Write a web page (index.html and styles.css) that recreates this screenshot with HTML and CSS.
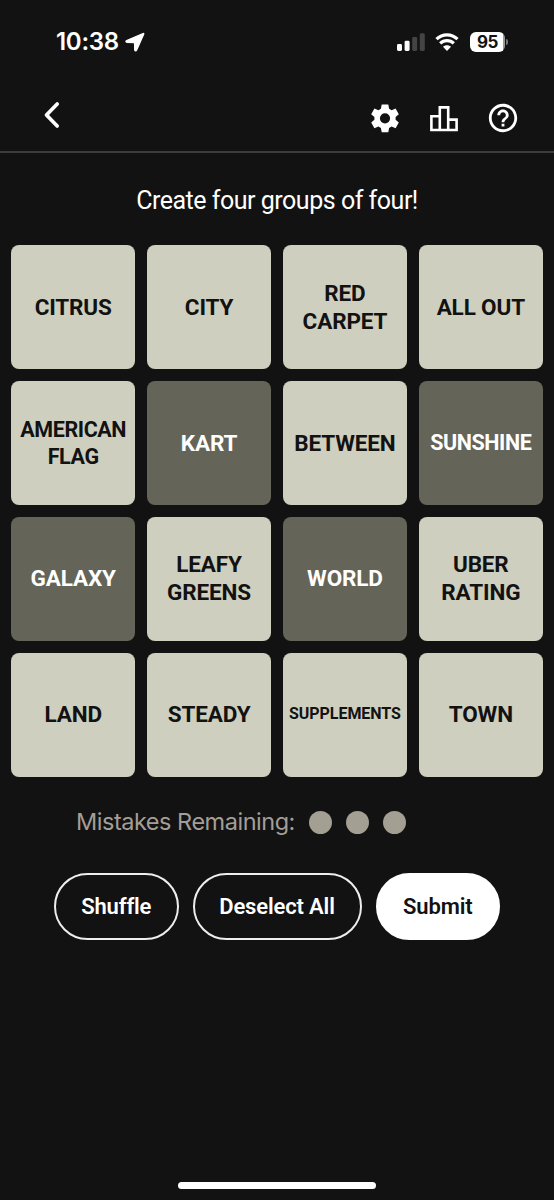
FILE: index.html
```html
<!DOCTYPE html>
<html lang="en">
<head>
<meta charset="utf-8">
<title>Connections</title>
<link rel="stylesheet" href="styles.css">
</head>
<body>
<div class="screen">
  <div class="status">
    <div class="clock"><span class="time">10:38</span>
      <svg class="location" width="20" height="20" viewBox="0 0 20 20"><path d="M18 1.500 1.700 8.600c-1.300.7-.9 1.700.3 1.800l7.500.3.200 7.200c.1 1.200 1.300 1.500 1.900.3L18.700 2.200c.3-.7-.1-1-.7-.7Z" fill="#fff" stroke="#fff" stroke-width="1.200" stroke-linejoin="round"/></svg>
    </div>
    <div class="indicators">
      <svg width="28" height="18" viewBox="0 0 28 18"><rect x="0" y="11" width="5" height="7" rx="1.4" fill="#fff"/><rect x="7.6" y="7.7" width="5" height="10.3" rx="1.4" fill="#fff"/><rect x="15.2" y="4" width="5" height="14" rx="1.4" fill="#444"/><rect x="22.8" y="0.3" width="5" height="17.7" rx="1.4" fill="#444"/></svg>
      <svg class="wifi" width="24" height="18" viewBox="0 0 24 18"><path d="M1.500 6.200C7.500 .3 16.500 .3 22.500 6.200M5.200 10.400C9.100 6.700 14.900 6.700 18.800 10.400" fill="none" stroke="#fff" stroke-width="3.200"/><path d="M8 13.800c2.300-2 5.700-2 8 0L12 17.900Z" fill="#fff"/></svg>
      <div class="battery"><span class="level">95</span></div><div class="battery-tip"></div>
    </div>
  </div>
  <div class="toolbar">
    <svg width="18" height="28" viewBox="0 0 18 28"><path d="M15.200 3 4.500 14l10.700 11" fill="none" stroke="#fff" stroke-width="3.700" stroke-linecap="round" stroke-linejoin="round"/></svg>
    <div class="tools">
      <svg width="34" height="34" viewBox="0 0 34 34"><path fill="#fff" fill-rule="evenodd" d="M13.700 3.500h6.600l.8 4.300 2.500 1.400 4-1.600 3.200 5.700-3.200 2.700v2.800l3.200 2.700-3.200 5.700-4-1.600-2.500 1.400-.8 4.200h-6.600l-.8-4.200-2.500-1.400-4 1.600-3.200-5.700 3.200-2.700V16l-3.200-2.700 3.200-5.700 4 1.600 2.500-1.400ZM17 12.200a5.100 5.100 0 1 0 0 10.200 5.100 5.100 0 0 0 0-10.200Z"/></svg>
      <svg width="28" height="34" viewBox="0 0 28 34"><path d="M9.800 15.300H1.400V29h25.200V18.600h-8.400M9.800 29.800V6.400h8.400v23.400" fill="none" stroke="#fff" stroke-width="2.600"/></svg>
      <svg width="34" height="34" viewBox="0 0 24 24"><path fill="#fff" d="M11 18h2v-2h-2v2Zm1-16C6.480 2 2 6.480 2 12s4.480 10 10 10 10-4.480 10-10S17.520 2 12 2Zm0 18c-4.410 0-8-3.590-8-8s3.590-8 8-8 8 3.590 8 8-3.590 8-8 8Zm0-14c-2.210 0-4 1.790-4 4h2c0-1.100.9-2 2-2s2 .9 2 2c0 2-3 1.750-3 5h2c0-2.250 3-2.500 3-5 0-2.210-1.790-4-4-4Z"/></svg>
    </div>
  </div>
  <div class="prompt"><span>Create four groups of four!</span></div>
  <div class="board">
    <div class="tile">CITRUS</div><div class="tile">CITY</div><div class="tile">RED<br>CARPET</div><div class="tile">ALL OUT</div>
    <div class="tile medium">AMERICAN<br>FLAG</div><div class="tile selected">KART</div><div class="tile">BETWEEN</div><div class="tile medium selected">SUNSHINE</div>
    <div class="tile selected">GALAXY</div><div class="tile">LEAFY<br>GREENS</div><div class="tile selected">WORLD</div><div class="tile">UBER<br>RATING</div>
    <div class="tile">LAND</div><div class="tile">STEADY</div><div class="tile small">SUPPLEMENTS</div><div class="tile">TOWN</div>
  </div>
  <div class="mistakes"><span class="mistakes-label">Mistakes Remaining:</span><div class="dots"><i class="dot"></i><i class="dot"></i><i class="dot"></i></div></div>
  <div class="actions">
    <button class="button">Shuffle</button><button class="button wide">Deselect All</button><button class="button submit">Submit</button>
  </div>
  <div class="home"></div>
</div>
</body>
</html>
```
FILE: styles.css
```css
* { box-sizing: border-box; }
body { margin: 0; background: #121212; }
svg { display: block; flex: none; }
.screen { width: 554px; height: 1200px; display: flex; flex-direction: column; background: #121212; color: #fff; font-family: Roboto, "Liberation Sans", sans-serif; overflow: hidden; }
.status { height: 82px; flex: none; display: flex; justify-content: space-between; align-items: center; padding: 1px 46px 0 56px; }
.clock { display: flex; align-items: center; gap: 6px; }
.time { font: 600 24px/30px Inter, sans-serif; letter-spacing: -0.3px; }
.indicators { display: flex; align-items: center; }
.wifi { margin: 0 11px 0 10px; }
.battery { width: 35px; height: 20px; border-radius: 6px; background: linear-gradient(90deg, #fff 95%, #999 95%); color: #121212; display: flex; align-items: center; justify-content: center; }
.level { font: 700 17px/20px Inter, sans-serif; letter-spacing: -0.4px; }
.battery-tip { width: 2px; height: 6px; margin-left: 1px; border-radius: 0 2px 2px 0; background: #777; }
.toolbar { height: 71px; flex: none; border-bottom: 2px solid #3c3c3c; display: flex; align-items: center; justify-content: space-between; padding: 0 34px 3px 42px; }
.tools { display: flex; align-items: center; gap: 28px; padding-top: 5px; }
.prompt { height: 92px; flex: none; display: flex; align-items: center; justify-content: center; font-size: 25px; line-height: 30px; letter-spacing: -0.48px; padding-top: 3px; }
.board { margin: 0 11px; flex: none; display: grid; grid-template-columns: repeat(4, 1fr); grid-auto-rows: 124.4px; gap: 11.5px; }
.tile { border-radius: 8px; background: #cfcfbf; color: #121212; display: flex; align-items: center; justify-content: center; text-align: center; font-weight: 700; font-size: 22.5px; line-height: 28px; letter-spacing: -0.15px; white-space: nowrap; padding-bottom: 1px; }
.medium { font-size: 21.5px; line-height: 27px; letter-spacing: -0.4px; }
.small { font-size: 16px; letter-spacing: -0.05px; }
.selected { background: #646458; color: #fff; }
.mistakes { height: 90px; flex: none; display: flex; align-items: center; padding-left: 76px; gap: 14.500px; }
.mistakes-label { font: 400 23.5px/30px Inter, sans-serif; letter-spacing: -0.48px; color: #a39e97; white-space: nowrap; }
.dots { display: flex; gap: 14px; }
.dot { width: 23px; height: 23px; border-radius: 50%; background: #a39f93; }
.actions { display: flex; gap: 14px; padding: 6px 0 0 54px; }
.button { width: 124.500px; height: 67px; border: 2px solid #eee; border-radius: 34px; background: transparent; color: #fff; padding: 0; font: 600 22px/30px Roboto, sans-serif; letter-spacing: -0.15px; white-space: nowrap; }
.wide { width: 169px; }
.submit { background: #fff; border-color: #fff; color: #121212; }
.home { width: 198px; height: 7px; border-radius: 4px; background: #fff; margin: auto auto 11px 178px; }
```
